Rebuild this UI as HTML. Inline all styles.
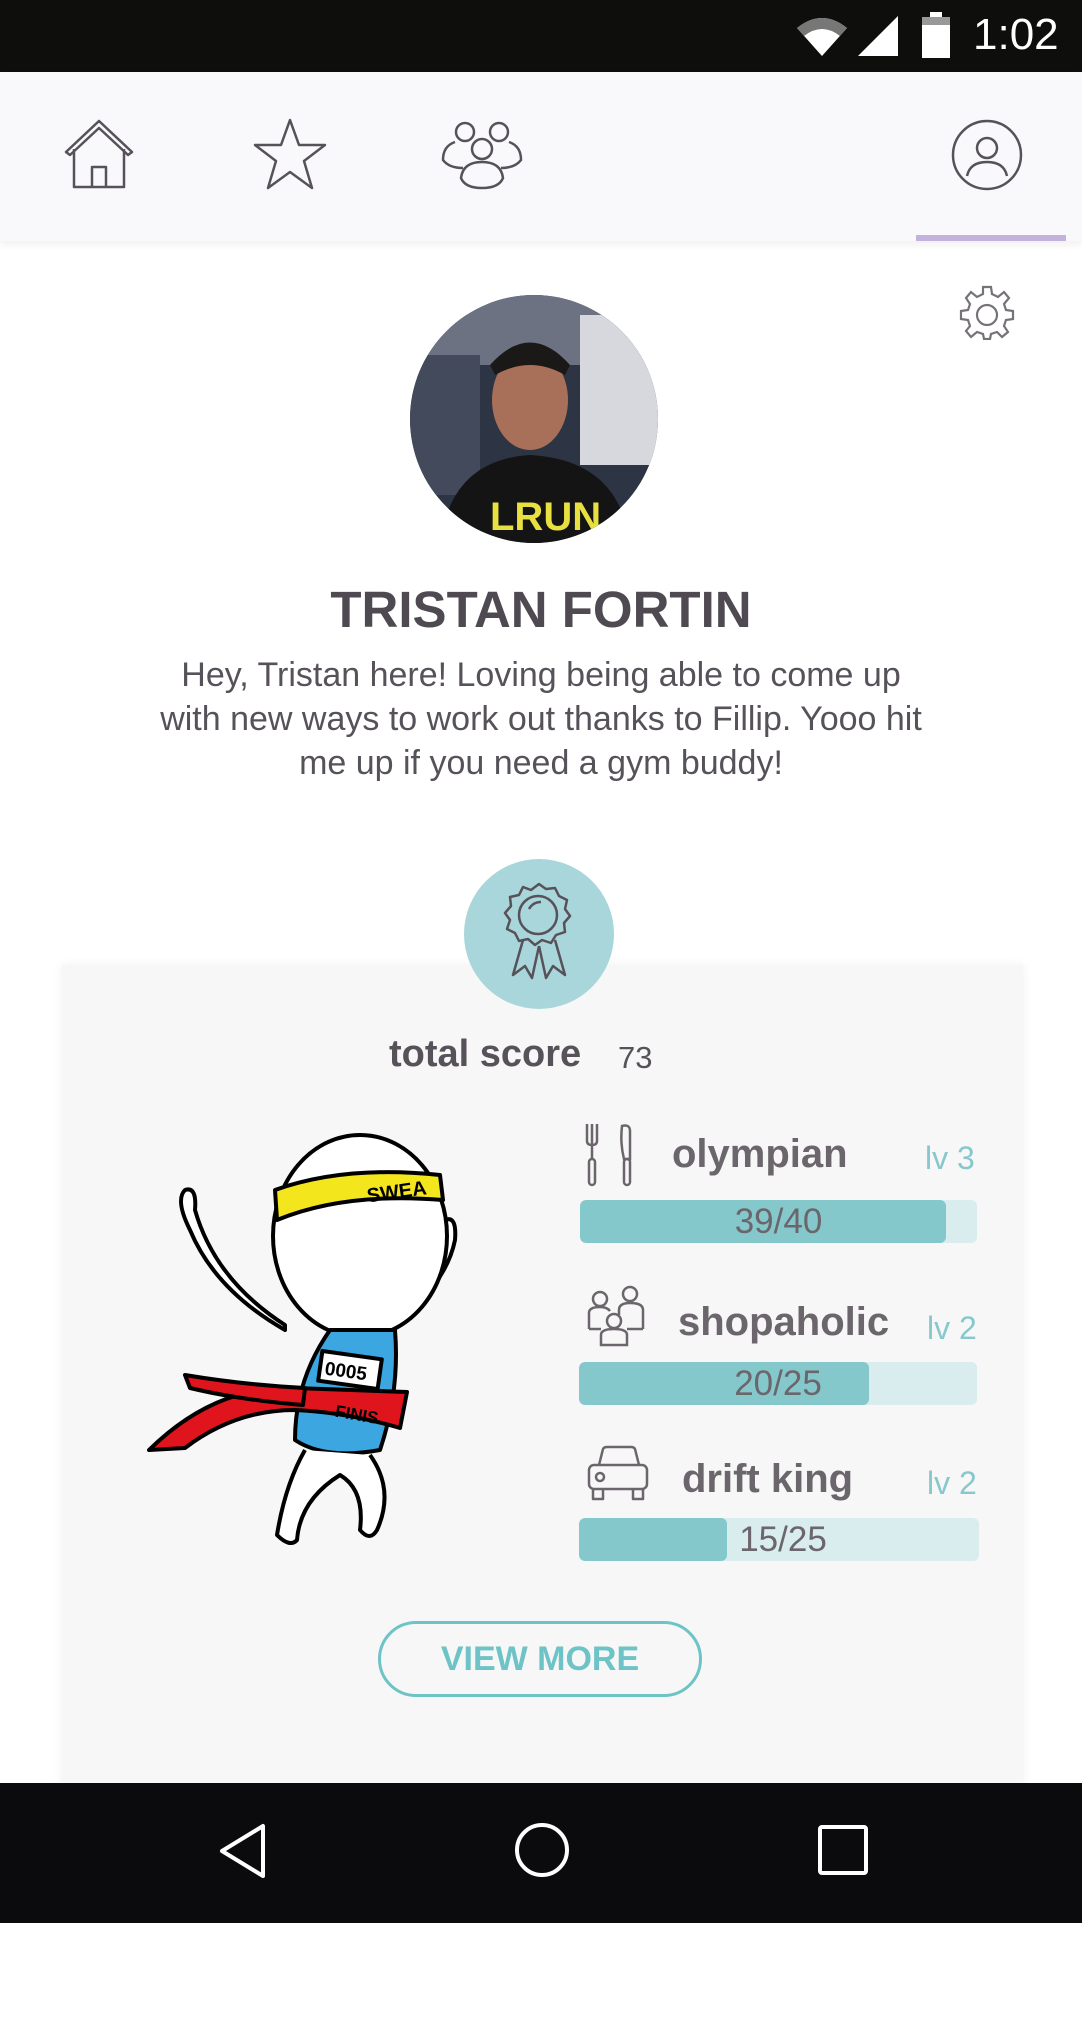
<!DOCTYPE html>
<html><head><meta charset="utf-8"><style>
*{margin:0;padding:0;box-sizing:border-box}
body{width:1082px;height:2018px;background:#fff;position:relative;overflow:hidden;font-family:"Liberation Sans",sans-serif;color:#57525a}
.abs{position:absolute}
.status{left:0;top:0;width:1082px;height:72px;background:#0e0e0c}
.nav{left:0;top:72px;width:1082px;height:169px;background:#f9f9fb;box-shadow:0 4px 8px rgba(0,0,0,0.06)}
.card{left:62px;top:965px;width:961px;height:830px;background:#f7f7f7;box-shadow:0 0 10px rgba(0,0,0,0.06)}
.bar{height:43px;background:#d9ecee;border-radius:6px;overflow:hidden}
.fill{height:100%;background:#85c8cc;border-radius:6px}
.bt{left:0;top:0;width:100%;text-align:center;font-size:35px;line-height:43px;color:#6b666c}
.lab{font-size:40px;font-weight:bold;color:#6b666c}
.lv{font-size:32px;color:#86c8cc}
.bottom{left:0;top:1783px;width:1082px;height:140px;background:#0b0b0d}
</style></head><body>
<div class="abs status">
<svg class="abs" style="left:795px;top:16px" width="60" height="42" viewBox="0 0 60 42"><path d="M2 12 Q27 -8 52 12 L27 40 Z" fill="#fff"/><path d="M2 12 Q27 -8 52 12 L45 20 Q27 6 9 20Z" fill="#777"/></svg>
<svg class="abs" style="left:858px;top:16px" width="42" height="42"><path d="M40 0 L40 40 L0 40 Z" fill="#fff"/></svg>
<svg class="abs" style="left:922px;top:12px" width="30" height="46"><rect x="8" y="0" width="12" height="6" fill="#fff"/><rect x="0" y="5" width="28" height="41" fill="#fff"/><rect x="0" y="5" width="28" height="8" fill="#999"/></svg>
<div class="abs" style="left:973px;top:10px;font-size:44px;color:#fff">1:02</div>
</div>
<div class="abs nav">
<svg class="abs" style="left:62px;top:45px" width="74" height="74" viewBox="0 0 74 74" fill="none" stroke="#57525a" stroke-width="2.5" stroke-linejoin="round"><path d="M4 35 L37 4 L70 35 L66 38 L37 11 L8 38 Z"/><path d="M12 32 V70 H62 V32"/><path d="M30 70 V50 H44 V70"/></svg>
<svg class="abs" style="left:252px;top:45px" width="76" height="74" viewBox="0 0 76 74" fill="none" stroke="#57525a" stroke-width="2.5" stroke-linejoin="round"><path d="M38 3 L47 28 L73 28 L52 44 L60 71 L38 55 L16 71 L24 44 L3 28 L29 28 Z"/></svg>
<svg class="abs" style="left:441px;top:48px" width="82" height="70" viewBox="0 0 82 70" fill="none" stroke="#57525a" stroke-width="2.5"><circle cx="24" cy="12" r="9"/><circle cx="58" cy="12" r="9"/><circle cx="41" cy="29" r="10"/><path d="M14 22 Q2 26 2 40 Q8 48 22 48"/><path d="M68 22 Q80 26 80 40 Q74 48 60 48"/><path d="M20 58 Q22 42 41 42 Q60 42 62 58 Q58 68 41 68 Q24 68 20 58Z"/></svg>
<svg class="abs" style="left:950px;top:46px" width="74" height="74" viewBox="0 0 74 74" fill="none" stroke="#57525a" stroke-width="2.5"><circle cx="37" cy="37" r="34"/><circle cx="37" cy="30" r="10"/><path d="M17 58 Q20 44 37 44 Q54 44 57 58"/></svg>
<div class="abs" style="left:916px;top:163px;width:150px;height:6px;background:#c3b3dc"></div>
</div>
<svg class="abs" style="left:959px;top:284px" width="56" height="56" viewBox="0 0 56 56" fill="none" stroke="#77727a" stroke-width="2.2"><path d="M24 3 H32 L33 10 L39 13 L45 8 L50 14 L45 20 L47 26 L54 27 V35 L47 36 L45 42 L49 48 L43 53 L38 48 L32 50 L31 55 H25 L24 50 L18 48 L12 53 L7 47 L11 42 L9 36 L2 35 V27 L9 26 L11 20 L7 14 L12 8 L18 13 L24 10 Z"/><circle cx="28" cy="31" r="10"/></svg>
<svg class="abs" style="left:410px;top:295px" width="248" height="248" viewBox="0 0 248 248"><defs><clipPath id="c"><circle cx="124" cy="124" r="124"/></clipPath></defs><g clip-path="url(#c)"><rect width="248" height="248" fill="#2d3444"/><rect x="0" y="0" width="248" height="70" fill="#6c7282"/><rect x="170" y="20" width="90" height="150" fill="#d6d8de"/><rect x="0" y="60" width="70" height="140" fill="#434a5c"/><ellipse cx="120" cy="105" rx="38" ry="50" fill="#a87058"/><path d="M80 70 Q120 25 160 70 L155 80 Q120 60 85 80Z" fill="#1b1818"/><path d="M30 250 Q40 165 120 160 Q210 165 220 250Z" fill="#141414"/><text x="80" y="235" font-size="40" font-weight="bold" fill="#e8e040" font-family="Liberation Sans">LRUN</text></g></svg>
<div class="abs" style="left:0;top:580px;width:1082px;text-align:center;font-size:51px;font-weight:bold;color:#4f4a52">TRISTAN FORTIN</div>
<div class="abs" style="left:40px;top:653px;width:1002px;text-align:center;font-size:34px;line-height:44px;color:#57525a">Hey, Tristan here! Loving being able to come up<br>with new ways to work out thanks to Fillip. Yooo hit<br>me up if you need a gym buddy!</div>
<div class="abs card"></div>
<div class="abs" style="left:464px;top:859px;width:150px;height:150px;border-radius:50%;background:#a9d6da"></div>
<svg class="abs" style="left:499px;top:880px" width="80" height="105" viewBox="0 0 80 105" fill="none" stroke="#57525a" stroke-width="2.5" stroke-linejoin="round"><path d="M40 4 L47 9 L56 8 L60 16 L68 20 L66 29 L71 36 L65 43 L66 52 L57 55 L52 63 L43 60 L36 65 L29 59 L20 61 L16 53 L8 49 L11 40 L6 33 L12 26 L11 17 L20 15 L24 7 L32 10 Z"/><circle cx="39" cy="35" r="19"/><path d="M30 29 Q34 22 42 22"/><path d="M24 60 L14 95 L26 86 L33 98 L40 66"/><path d="M40 66 L47 98 L54 86 L66 95 L56 60"/></svg>
<div class="abs" style="left:389px;top:1033px;font-size:38px;font-weight:bold;color:#57525a">total score</div>
<div class="abs" style="left:618px;top:1040px;font-size:31px;color:#57525a">73</div>
<svg class="abs" style="left:145px;top:1130px" width="320" height="420" viewBox="0 0 320 420" stroke="#000" stroke-width="4" stroke-linejoin="round">
<path d="M140 200 Q70 160 45 100 Q30 70 40 60 Q52 56 50 80 Q70 150 140 195Z" fill="#fff"/>
<path d="M235 205 Q300 160 310 110 Q312 85 300 90 Q300 140 230 195Z" fill="#fff"/>
<ellipse cx="215" cy="106" rx="87" ry="101" fill="#fff"/>
<path d="M130 60 Q200 35 295 45 L298 70 Q200 62 132 90 Z" fill="#f4e61c"/>
<text x="222" y="70" font-size="20" font-weight="bold" stroke="none" fill="#000" transform="rotate(-8 240 65)">SWEA</text>
<path d="M185 200 L250 200 Q255 260 235 320 Q180 330 150 310 Q150 250 185 200Z" fill="#3ba6e0"/>
<rect x="175" y="225" width="60" height="30" fill="#fff" transform="rotate(8 205 240)"/>
<text x="180" y="248" font-size="19" font-weight="bold" stroke="none" fill="#000" transform="rotate(8 205 240)">0005</text>
<path d="M4 320 Q70 255 150 258 Q210 260 262 262 L255 298 Q200 282 150 280 Q90 280 40 318 Z" fill="#e0141c"/>
<path d="M40 245 Q100 255 160 258 L158 275 Q95 270 45 258Z" fill="#e0141c"/>
<text x="190" y="290" font-size="17" font-weight="bold" stroke="none" fill="#000" transform="rotate(10 210 285)">FINIS</text>
<path d="M160 320 Q140 355 132 405 Q145 418 152 410 Q155 370 195 345 Q220 360 215 400 Q225 412 232 400 Q250 360 225 325" fill="#fff"/>
</svg>
<svg class="abs" style="left:584px;top:1123px" width="54" height="64" viewBox="0 0 54 64" fill="none" stroke="#6b666c" stroke-width="2.5"><path d="M3 1 V18 Q3 22 8 22 Q13 22 13 18 V1 M8 1 V22"/><rect x="5" y="36" width="6" height="26" rx="3"/><path d="M8 22 V36"/><path d="M38 3 Q46 1 46 8 V36 H40 Q36 20 38 3Z"/><rect x="40" y="36" width="6" height="26" rx="3"/></svg>
<div class="abs lab" style="left:672px;top:1132px">olympian</div>
<div class="abs lv" style="left:925px;top:1140px">lv 3</div>
<div class="abs bar" style="left:580px;top:1200px;width:397px"><div class="fill" style="width:366px"></div><div class="abs bt">39/40</div></div>
<svg class="abs" style="left:585px;top:1285px" width="62" height="62" viewBox="0 0 62 62" fill="none" stroke="#6b666c" stroke-width="2.5"><circle cx="15" cy="14" r="7"/><circle cx="45" cy="9" r="7"/><circle cx="29" cy="36" r="7"/><path d="M4 44 V28 Q4 22 15 22 Q22 22 25 26"/><path d="M58 44 V25 Q58 18 45 18 Q34 18 34 25 V30"/><path d="M16 60 V50 Q16 44 29 44 Q42 44 42 50 V60 Z"/><path d="M4 44 H16 M42 44 H58"/></svg>
<div class="abs lab" style="left:678px;top:1300px">shopaholic</div>
<div class="abs lv" style="left:927px;top:1310px">lv 2</div>
<div class="abs bar" style="left:579px;top:1362px;width:398px"><div class="fill" style="width:290px"></div><div class="abs bt">20/25</div></div>
<svg class="abs" style="left:587px;top:1445px" width="62" height="60" viewBox="0 0 62 60" fill="none" stroke="#6b666c" stroke-width="2.5" stroke-linejoin="round"><path d="M12 20 L16 4 Q17 2 20 2 H44 Q47 2 48 4 L52 20"/><rect x="2" y="20" width="58" height="24" rx="5"/><circle cx="13" cy="32" r="4"/><path d="M6 44 V54 H16 V44 M46 44 V54 H56 V44"/></svg>
<div class="abs lab" style="left:682px;top:1457px">drift king</div>
<div class="abs lv" style="left:927px;top:1465px">lv 2</div>
<div class="abs bar" style="left:579px;top:1518px;width:400px"><div class="fill" style="width:148px"></div><div class="abs bt" style="padding-left:8px">15/25</div></div>
<div class="abs" style="left:378px;top:1621px;width:324px;height:76px;border:3px solid #6ec3c7;border-radius:38px;text-align:center;line-height:70px;font-size:34px;font-weight:bold;color:#6ec3c7">VIEW MORE</div>
<div class="abs bottom">
<svg class="abs" style="left:218px;top:40px" width="50" height="56" viewBox="0 0 50 56" fill="none" stroke="#fff" stroke-width="4" stroke-linejoin="round"><path d="M45 3 V53 L4 28 Z"/></svg>
<svg class="abs" style="left:513px;top:38px" width="58" height="58"><circle cx="29" cy="29" r="25" fill="none" stroke="#fff" stroke-width="4"/></svg>
<svg class="abs" style="left:817px;top:41px" width="52" height="52"><rect x="3" y="3" width="46" height="46" fill="none" stroke="#fff" stroke-width="4" rx="2"/></svg>
</div>
</body></html>
